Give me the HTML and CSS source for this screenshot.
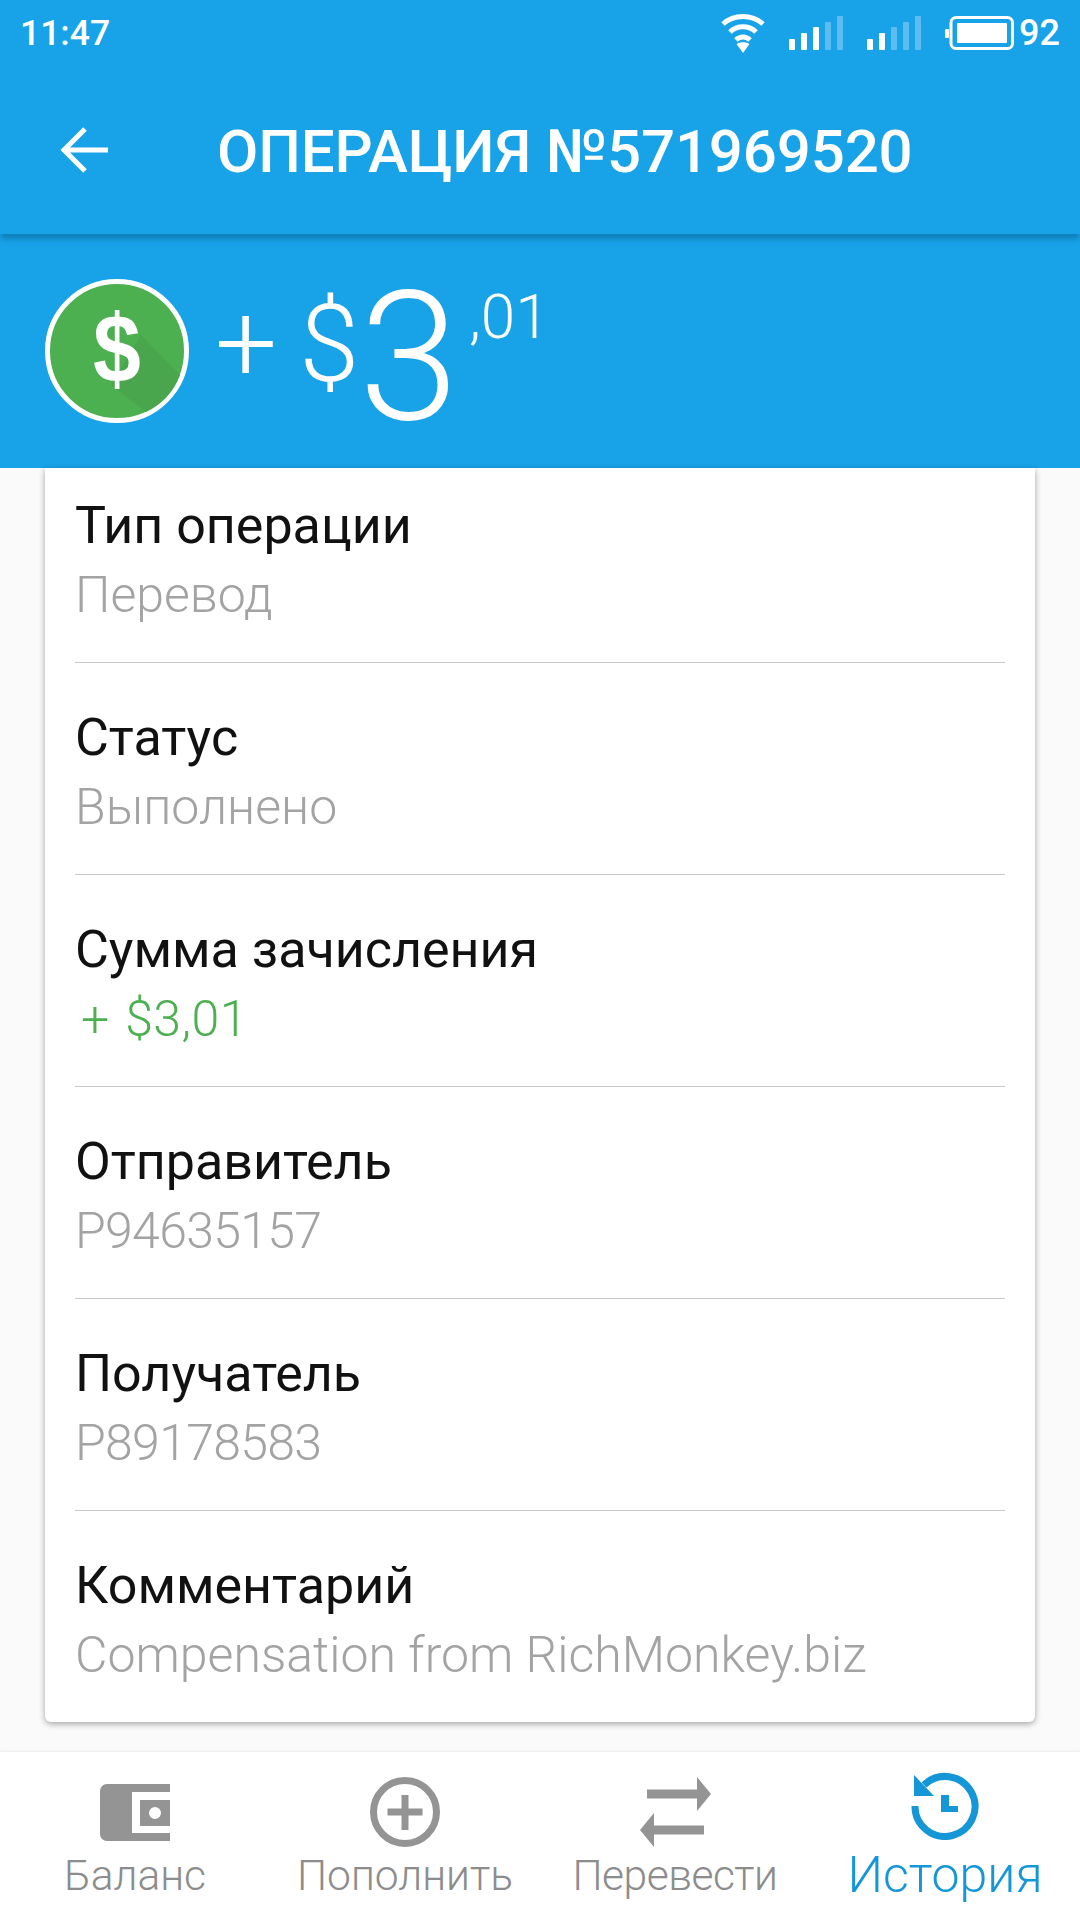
FILE: index.html
```html
<!DOCTYPE html>
<html lang="ru">
<head>
  <meta charset="UTF-8">
  <title>Операция</title>
  <link rel="stylesheet" href="styles.css">
</head>
<body>

<div class="screen">
  <div class="statusbar">
    <span class="time">11:47</span>
    <div class="status-icons">
      <svg class="wifi" width="44" height="40" viewBox="0 0 44 40">
        <path d="M2 11C13 1 31 1 42 11M9 19C16 12 28 12 35 19M15 27C19 23 25 23 29 27" fill="none" stroke="#fff" stroke-width="5"/>
        <path d="M15.5 31C19 28.5 25 28.5 28.500 31L22 40Z" fill="#fff"/>
      </svg>
      <svg class="signal" width="54" height="34" viewBox="0 0 54 34">
        <rect x="0" y="23" width="6" height="11" rx="1" fill="#fff"/>
        <rect x="12" y="17" width="6" height="17" rx="1" fill="#fff"/>
        <rect x="24" y="11" width="6" height="23" rx="1" fill="#fff"/>
        <rect x="36" y="6" width="6" height="28" rx="1" fill="#5cbdf0"/>
        <rect x="48" y="0" width="6" height="34" rx="1" fill="#5cbdf0"/>
      </svg>
      <svg class="signal" width="54" height="34" viewBox="0 0 54 34">
        <rect x="0" y="23" width="6" height="11" rx="1" fill="#fff"/>
        <rect x="12" y="17" width="6" height="17" rx="1" fill="#fff"/>
        <rect x="24" y="11" width="6" height="23" rx="1" fill="#5cbdf0"/>
        <rect x="36" y="6" width="6" height="28" rx="1" fill="#5cbdf0"/>
        <rect x="48" y="0" width="6" height="34" rx="1" fill="#5cbdf0"/>
      </svg>
      <svg class="battery" width="69" height="34" viewBox="0 0 69 34">
        <rect x="0" y="13" width="4" height="9" rx="1" fill="#fff"/>
        <rect x="6" y="1.500" width="61.500" height="31" rx="5" fill="none" stroke="#fff" stroke-width="3"/>
        <rect x="12" y="7" width="50" height="20" rx="1" fill="#fff"/>
      </svg>
      <span class="percent">92</span>
    </div>
  </div>

  <div class="appbar">
    <svg class="back" width="50" height="50" viewBox="0 0 50 50">
      <path d="M48 25H5M25 4L4 25L25 46" fill="none" stroke="#fff" stroke-width="5"/>
    </svg>
    <h1 class="title">ОПЕРАЦИЯ №571969520</h1>
  </div>

  <div class="hero">
    <svg class="coin" width="144" height="144" viewBox="0 0 144 144">
      <circle cx="72" cy="72" r="69.500" fill="#4caf50" stroke="#fff" stroke-width="5"/>
      <path d="M96 56L135 96A67 67 0 0 1 101 133L66 106Z" fill="#49a64d"/>
      <text class="coin-sign" x="72" y="92" text-anchor="middle" transform="scale(1 1.12)">$</text>
    </svg>
    <div class="amount">
      <span class="amount-plus">+</span>
      <span class="amount-cur">$</span>
      <span class="amount-int">3</span>
      <span class="amount-dec">,01</span>
    </div>
  </div>

  <div class="content">
    <div class="card">
      <div class="row">
        <div class="row-label">Тип операции</div>
        <div class="row-value">Перевод</div>
      </div>
      <div class="row">
        <div class="row-label">Статус</div>
        <div class="row-value">Выполнено</div>
      </div>
      <div class="row">
        <div class="row-label">Сумма зачисления</div>
        <div class="row-value green">+ $3,01</div>
      </div>
      <div class="row">
        <div class="row-label">Отправитель</div>
        <div class="row-value wallet-id">P94635157</div>
      </div>
      <div class="row">
        <div class="row-label">Получатель</div>
        <div class="row-value wallet-id">P89178583</div>
      </div>
      <div class="row">
        <div class="row-label">Комментарий</div>
        <div class="row-value">Compensation from RichMonkey.biz</div>
      </div>
    </div>
  </div>

  <div class="tabbar">
    <div class="tab">
      <div class="tab-icon">
        <svg width="70" height="57" viewBox="0 0 70 57">
          <path d="M7 0H70V8H32V49H70V57H7A7 7 0 0 1 0 50V7A7 7 0 0 1 7 0Z" fill="#949494"/>
          <path fill-rule="evenodd" d="M40 16H70V42H40ZM55 23A6 6 0 1 0 55 35A6 6 0 1 0 55 23Z" fill="#949494"/>
        </svg>
      </div>
      <span class="tab-label">Баланс</span>
    </div>
    <div class="tab">
      <div class="tab-icon">
        <svg width="70" height="70" viewBox="0 0 70 70">
          <circle cx="35" cy="35" r="31.500" fill="none" stroke="#949494" stroke-width="7"/>
          <path d="M35 18V53M17.500 35H52.500" fill="none" stroke="#949494" stroke-width="7"/>
        </svg>
      </div>
      <span class="tab-label">Пополнить</span>
    </div>
    <div class="tab">
      <div class="tab-icon">
        <svg width="71" height="70" viewBox="0 0 71 70">
          <path d="M7 12.500H57V0L71 17L57 34V21.500H7Z" fill="#949494"/>
          <path d="M64 48.500H14V36L0 53L14 70V57.500H64Z" fill="#949494"/>
        </svg>
      </div>
      <span class="tab-label narrow">Перевести</span>
    </div>
    <div class="tab active">
      <div class="tab-icon">
        <svg width="68" height="68" viewBox="0 0 68 68">
          <path d="M4 34A30 30 0 1 0 13 13" fill="none" stroke="#1596d6" stroke-width="7"/>
          <path d="M3 3V24H23Z" fill="#1596d6"/>
          <path d="M30 23H38V34H47V40H30Z" fill="#1596d6"/>
        </svg>
      </div>
      <span class="tab-label">История</span>
    </div>
  </div>
</div>

</body>
</html>
```

FILE: styles.css
```css
* { box-sizing: border-box; }

html, body {
  margin: 0;
  padding: 0;
}

body {
  font-family: Roboto, sans-serif;
  background-color: #fafafa;
}

.screen {
  width: 1080px;
  height: 1920px;
  display: flex;
  flex-direction: column;
  overflow: hidden;
}

/* status bar */
.statusbar {
  height: 66px;
  background-color: #18a2e8;
  color: #fff;
  display: flex;
  justify-content: space-between;
  padding: 13px 20px 0 20px;
}

.time {
  font-size: 35.5px;
  font-weight: 500;
  line-height: 40px;
}

.status-icons {
  display: flex;
  align-items: flex-start;
}

.wifi { margin-right: 24px; }
.signal { margin-top: 3px; margin-right: 24px; }
.battery { margin-top: 3px; margin-right: 5px; }

.percent {
  font-size: 36px;
  font-weight: 500;
  line-height: 40px;
}

/* app bar */
.appbar {
  height: 168px;
  background-color: #18a2e8;
  display: flex;
  align-items: center;
  padding-left: 60px;
  position: relative;
  z-index: 2;
  box-shadow: 0 6px 5px -1px rgba(10, 100, 150, 0.55);
}

.back { flex: none; }

.title {
  margin: 2px 0 0 107px;
  font-size: 60px;
  font-weight: 500;
  letter-spacing: -0.15px;
  color: #fff;
  white-space: nowrap;
}

/* amount */
.hero {
  height: 234px;
  background-color: #18a2e8;
  display: flex;
  align-items: flex-start;
  padding: 45px 0 0 45px;
}

.coin { flex: none; }

.coin-sign {
  font-family: "Liberation Sans", sans-serif;
  font-size: 86px;
  font-weight: 700;
  fill: #fff;
}

.amount {
  display: flex;
  align-items: flex-start;
  margin-left: 26px;
  color: #fff;
  font-weight: 300;
}

.amount-plus {
  font-size: 110px;
  line-height: 130px;
  margin-right: 22px;
}

.amount-cur {
  font-size: 108px;
  line-height: 130px;
}

.amount-int {
  font-size: 180px;
  font-weight: 300;
  line-height: 158px;
}

.amount-dec {
  font-size: 62px;
  line-height: 76px;
  margin-left: 10px;
}

/* details */
.content {
  flex: 1;
  padding: 0 45px;
}

.card {
  height: 1254px;
  background-color: #fff;
  border-radius: 0 0 6px 6px;
  box-shadow: 0 2px 6px rgba(0, 0, 0, 0.35);
  padding: 0 30px;
}

.row {
  height: 212px;
  padding-top: 39px;
  border-bottom: 1px solid #c8c8c8;
}

.row:first-child { height: 195px; padding-top: 22px; }
.row:last-child { border-bottom: none; }

.row-label {
  font-size: 52px;
  line-height: 71px;
  color: #111;
}

.row-value {
  font-size: 50px;
  font-weight: 300;
  line-height: 68px;
  color: #a3a3a3;
}

.row-value.green {
  color: #4caf50;
  padding-left: 6px;
  word-spacing: 3px;
  letter-spacing: 0.4px;
}

.row-value.wallet-id { letter-spacing: -0.7px; }

/* bottom tabs */
.tabbar {
  height: 168px;
  background-color: #fff;
  display: grid;
  grid-template-columns: repeat(4, 1fr);
  position: relative;
  box-shadow: 0 -1px 2px rgba(0, 0, 0, 0.06);
}

.tab {
  display: flex;
  flex-direction: column;
  align-items: center;
}

.tab-icon {
  height: 100px;
  display: flex;
  align-items: center;
  justify-content: center;
  padding-top: 20px;
}

.tab-label {
  font-size: 42.5px;
  font-weight: 300;
  line-height: 48px;
  color: #8c8c8c;
}

.tab-label.narrow { letter-spacing: -0.5px; }

.tab.active .tab-icon { padding-top: 8px; }

.tab.active .tab-label {
  font-size: 50px;
  line-height: 46px;
  color: #1596d6;
}
```
